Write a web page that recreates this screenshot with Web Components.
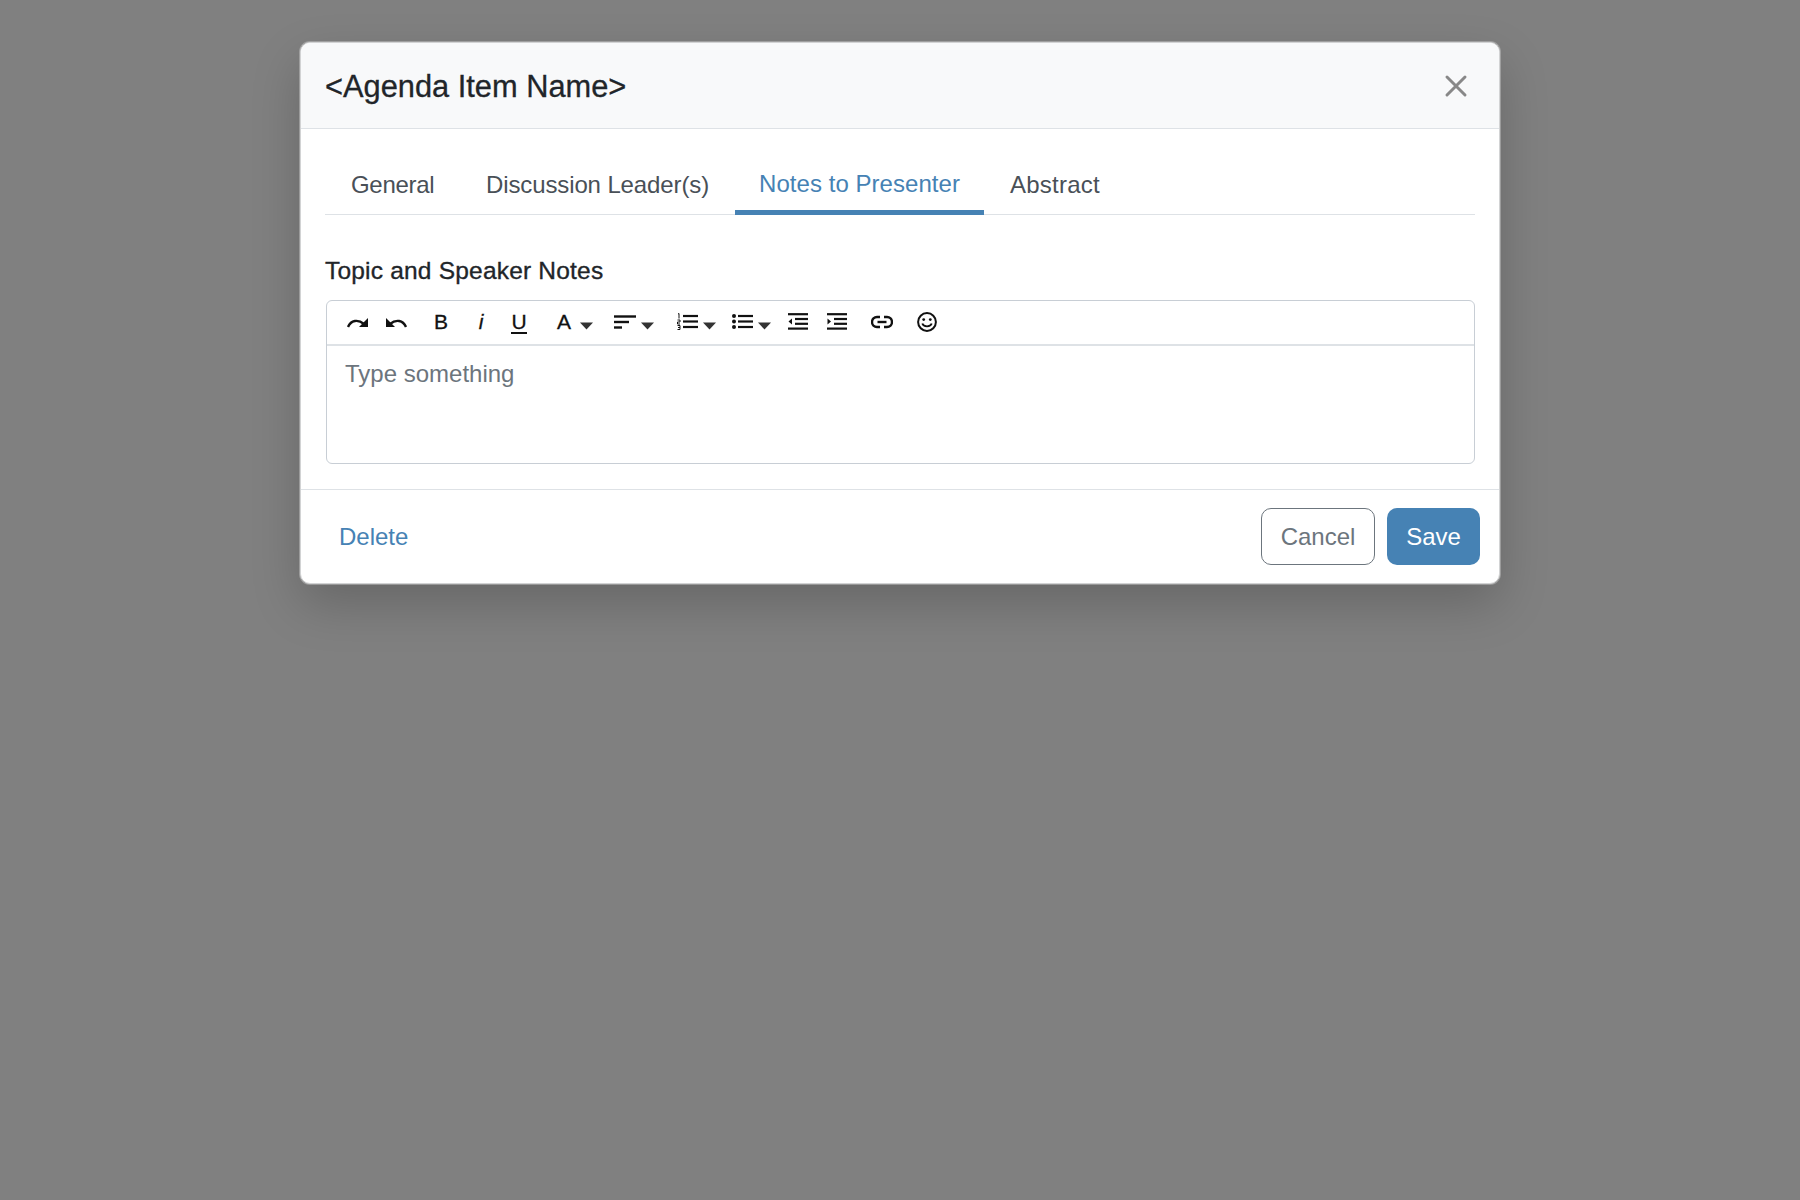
<!DOCTYPE html>
<html>
<head>
<meta charset="utf-8">
<title>Agenda Item</title>
<style>
html,body{margin:0;padding:0;height:100%;}
body{background:#808080;font-family:"Liberation Sans",Arial,sans-serif;color:#212529;}
</style>
</head>
<body>
<agenda-modal title-text="<Agenda Item Name>">
    <modal-tabs active="2"></modal-tabs>
    <rich-editor label="Topic and Speaker Notes" placeholder="Type something"></rich-editor>
    <modal-button slot="footer-left" kind="link">Delete</modal-button>
    <modal-button slot="footer-right" kind="outline">Cancel</modal-button>
    <modal-button slot="footer-right" kind="primary">Save</modal-button>
</agenda-modal>

<script>
//==============================================================================================================
const modalTemplate = document.createElement("template");
modalTemplate.innerHTML=`
    <style>
    :host{
    display: flex;
    justify-content: center;
    padding-top: 42px;
    }
    .box{
    width: 1198px;
    background: #fff;
    border: 1px solid #d2d3d4;
    border-radius: 10px;
    box-shadow: 0 0 0 1px rgba(205,205,205,.45), 0 20px 50px rgba(0,0,0,.2);
    overflow: hidden;
    }
    header{
    display: flex;
    align-items: center;
    justify-content: space-between;
    height: 85px;
    padding: 0 24px;
    background: #f8f9fa;
    border-bottom: 1px solid #dee2e6;
    }
    h2{
    margin: 3px 0 0;
    font-size: 30.8px;
    line-height: 36px;
    font-weight: 400;
    color: #212529;
    -webkit-text-stroke: .3px #212529;
    }
    svg{
    display: block;
    margin-right: 7px;
    }
    main{
    padding: 24px 24px 25px;
    }
    footer{
    display: flex;
    align-items: center;
    justify-content: space-between;
    padding: 18px 19px 18px 18px;
    border-top: 1px solid #dee2e6;
    }
    .right{
    display: flex;
    gap: 12px;
    }
    </style>
    <div class="box">
        <header>
            <h2></h2>
            <svg width="24" height="24" viewBox="0 0 24 24"><path d="M3 3L21 21M21 3L3 21" stroke="#888" stroke-width="3" stroke-linecap="round"/></svg>
        </header>
        <main><slot></slot></main>
        <footer>
            <div><slot name="footer-left"></slot></div>
            <div class="right"><slot name="footer-right"></slot></div>
        </footer>
    </div>
`;

class AgendaModal extends HTMLElement{
    constructor() {
        super();
        this.attachShadow({mode:"open"});
        this.shadowRoot.appendChild(modalTemplate.content.cloneNode(true));
        this.shadowRoot.querySelector('h2').textContent = this.getAttribute('title-text');
    }
}
window.customElements.define('agenda-modal',AgendaModal);

//==============================================================================================================
const tabsTemplate = document.createElement("template");
tabsTemplate.innerHTML=`
    <style>
    :host{
    display: flex;
    height: 62px;
    box-sizing: border-box;
    border-bottom: 1px solid #dee2e6;
    font-size: 24px;
    }
    div{
    flex: none;
    height: 62px;
    box-sizing: border-box;
    padding: 17px 0 0 26px;
    line-height: 30px;
    color: #495057;
    white-space: nowrap;
    }
    div.active{
    height: 62px;
    padding: 16px 0 0 24px;
    color: steelblue;
    border-bottom: 5px solid steelblue;
    }
    </style>
`;

class ModalTabs extends HTMLElement{
    constructor() {
        super();
        this.attachShadow({mode:"open"});
        this.shadowRoot.appendChild(tabsTemplate.content.cloneNode(true));
        // name, tab width, letter spacing
        let names = [["General",135,-0.3],["Discussion Leader(s)",275,-0.12],["Notes to Presenter",249,0.05],["Abstract",135,0.25]];
        names.forEach(([name,width,spacing],i)=>{
            let tab = document.createElement("div");
            tab.textContent = name;
            tab.style.width = width + "px";
            tab.style.letterSpacing = spacing + "px";
            if (i === +this.getAttribute('active')){
                tab.className = "active";
            }
            this.shadowRoot.appendChild(tab);
        });
    }
}
window.customElements.define('modal-tabs',ModalTabs);

//==============================================================================================================
const caret = `<svg class="caret" width="13" height="8" viewBox="0 0 13 8"><path d="M0 0.5H13L6.5 7.5Z" fill="#333"/></svg>`;
const line = (d,w=2)=>`<path d="${d}" stroke="#111" stroke-width="${w}" fill="none"/>`;

// each tool: gap in front of it, then its markup
const tools = [
    [20,`<svg width="21" height="12" viewBox="0 0 21 12">${line("M1 11C4 4 11 3 17 8",2.4)}<path d="M21 2V11H12Z" fill="#111"/></svg>`],
    [18,`<svg width="21" height="12" viewBox="0 0 21 12">${line("M20 11C17 4 10 3 4 8",2.4)}<path d="M0 2V11H9Z" fill="#111"/></svg>`],
    [27,`<span class="glyph" style="width:14px">B</span>`],
    [29,`<span class="glyph i" style="width:8px">i</span>`],
    [26,`<span class="glyph u" style="width:16px">U</span>`],
    [30,`<span class="glyph" style="width:14px">A</span>`],
    [9,caret],
    [21,`<svg width="22" height="14" viewBox="0 0 22 14">${line("M0 1.5H22",2.4)}${line("M0 7H15",2.4)}${line("M0 12.5H8",2.4)}</svg>`],
    [5,caret],
    [23,`<svg width="21" height="17" viewBox="0 0 21 17">
        <path d="M1 1L2 0.5V5.5" stroke="#111" fill="none"/>
        <path d="M0.5 7H3V9H0.5V11H3" stroke="#111" fill="none"/>
        <path d="M0.5 12.5H3V14.5H1M3 14.5V16.5H0.5" stroke="#111" fill="none"/>
        ${line("M6 3H21",2.2)}${line("M6 8.5H21",2.2)}${line("M6 14H21",2.2)}</svg>`],
    [5,caret],
    [16,`<svg width="21" height="15" viewBox="0 0 21 15">
        <circle cx="2" cy="2" r="2" fill="#111"/><circle cx="2" cy="7.5" r="2" fill="#111"/><circle cx="2" cy="13" r="2" fill="#111"/>
        ${line("M6 2H21",2.2)}${line("M6 7.5H21",2.2)}${line("M6 13H21",2.2)}</svg>`],
    [5,caret],
    [17,`<svg width="20" height="17" viewBox="0 0 20 17">
        ${line("M0 1.2H20",2.2)}${line("M7 6H20",2.2)}${line("M7 10.8H20",2.2)}${line("M0 15.6H20",2.2)}
        <path d="M4 5.5V11.5L0.5 8.5Z" fill="#111"/></svg>`],
    [19,`<svg width="20" height="17" viewBox="0 0 20 17">
        ${line("M0 1.2H20",2.2)}${line("M7 6H20",2.2)}${line("M7 10.8H20",2.2)}${line("M0 15.6H20",2.2)}
        <path d="M0.5 5.5V11.5L4 8.5Z" fill="#111"/></svg>`],
    [24,`<svg width="22" height="14" viewBox="0 0 22 14">
        <path d="M9 2H6a5 5 0 0 0 0 10H9M13 2H16a5 5 0 0 1 0 10H13" stroke="#111" stroke-width="2.4" fill="none"/>
        ${line("M6.5 7H15.5",2.4)}</svg>`],
    [24,`<svg width="20" height="20" viewBox="0 0 20 20">
        <circle cx="10" cy="10" r="8.9" stroke="#111" stroke-width="2" fill="none"/>
        <circle cx="6.7" cy="7.6" r="1.4" fill="#111"/><circle cx="13.3" cy="7.6" r="1.4" fill="#111"/>
        <path d="M5.3 11.5C6.5 15.2 13.5 15.2 14.7 11.5" stroke="#111" stroke-width="1.8" fill="none"/></svg>`]
];

const editorTemplate = document.createElement("template");
editorTemplate.innerHTML=`
    <style>
    :host{
    display: block;
    margin-top: 41px;
    }
    label{
    display: block;
    margin-bottom: 14px;
    font-size: 24.5px;
    letter-spacing: .2px;
    line-height: 30px;
    color: #212529;
    -webkit-text-stroke: .35px #212529;
    }
    .editor{
    height: 164px;
    margin-left: 1px;
    box-sizing: border-box;
    border: 1px solid #c8ced5;
    border-radius: 6px;
    }
    .toolbar{
    display: flex;
    align-items: center;
    height: 45px;
    padding-bottom: 2px;
    box-sizing: border-box;
    border-bottom: 2px solid #dee2e6;
    color: #111;
    }
    .toolbar svg{
    display: block;
    flex: none;
    }
    .caret{
    margin-top: 9px;
    }
    .glyph{
    display: block;
    flex: none;
    text-align: center;
    font-size: 21px;
    line-height: 24px;
    -webkit-text-stroke: .3px #111;
    }
    .i{
    font-style: italic;
    }
    .u{
    border-bottom: 2px solid #111;
    line-height: 21px;
    margin-top: 2px;
    }
    .placeholder{
    padding: 13px 18px;
    font-size: 24px;
    line-height: 30px;
    color: #6c757d;
    }
    </style>
    <label></label>
    <div class="editor">
        <div class="toolbar"></div>
        <div class="placeholder"></div>
    </div>
`;

class RichEditor extends HTMLElement{
    constructor() {
        super();
        this.attachShadow({mode:"open"});
        this.shadowRoot.appendChild(editorTemplate.content.cloneNode(true));
        this.shadowRoot.querySelector('label').textContent = this.getAttribute('label');
        this.shadowRoot.querySelector('.placeholder').textContent = this.getAttribute('placeholder');
        let bar = this.shadowRoot.querySelector('.toolbar');
        tools.forEach(([gap,markup])=>{
            bar.insertAdjacentHTML('beforeend',markup);
            bar.lastElementChild.style.marginLeft = gap + "px";
        });
    }
}
window.customElements.define('rich-editor',RichEditor);

//==============================================================================================================
const buttonTemplate = document.createElement("template");
buttonTemplate.innerHTML=`
    <style>
    :host{
    display: block;
    height: 57px;
    box-sizing: border-box;
    border-radius: 10px;
    font-size: 24px;
    line-height: 57px;
    }
    :host([kind="link"]){
    padding: 0 20px;
    color: steelblue;
    }
    :host([kind="outline"]){
    width: 114px;
    text-align: center;
    line-height: 55px;
    color: #6c757d;
    border: 1.5px solid #6c757d;
    }
    :host([kind="primary"]){
    width: 93px;
    text-align: center;
    color: #fff;
    background: steelblue;
    }
    </style>
    <slot></slot>
`;

class ModalButton extends HTMLElement{
    constructor() {
        super();
        this.attachShadow({mode:"open"});
        this.shadowRoot.appendChild(buttonTemplate.content.cloneNode(true));
    }
}
window.customElements.define('modal-button',ModalButton);
</script>
</body>
</html>
